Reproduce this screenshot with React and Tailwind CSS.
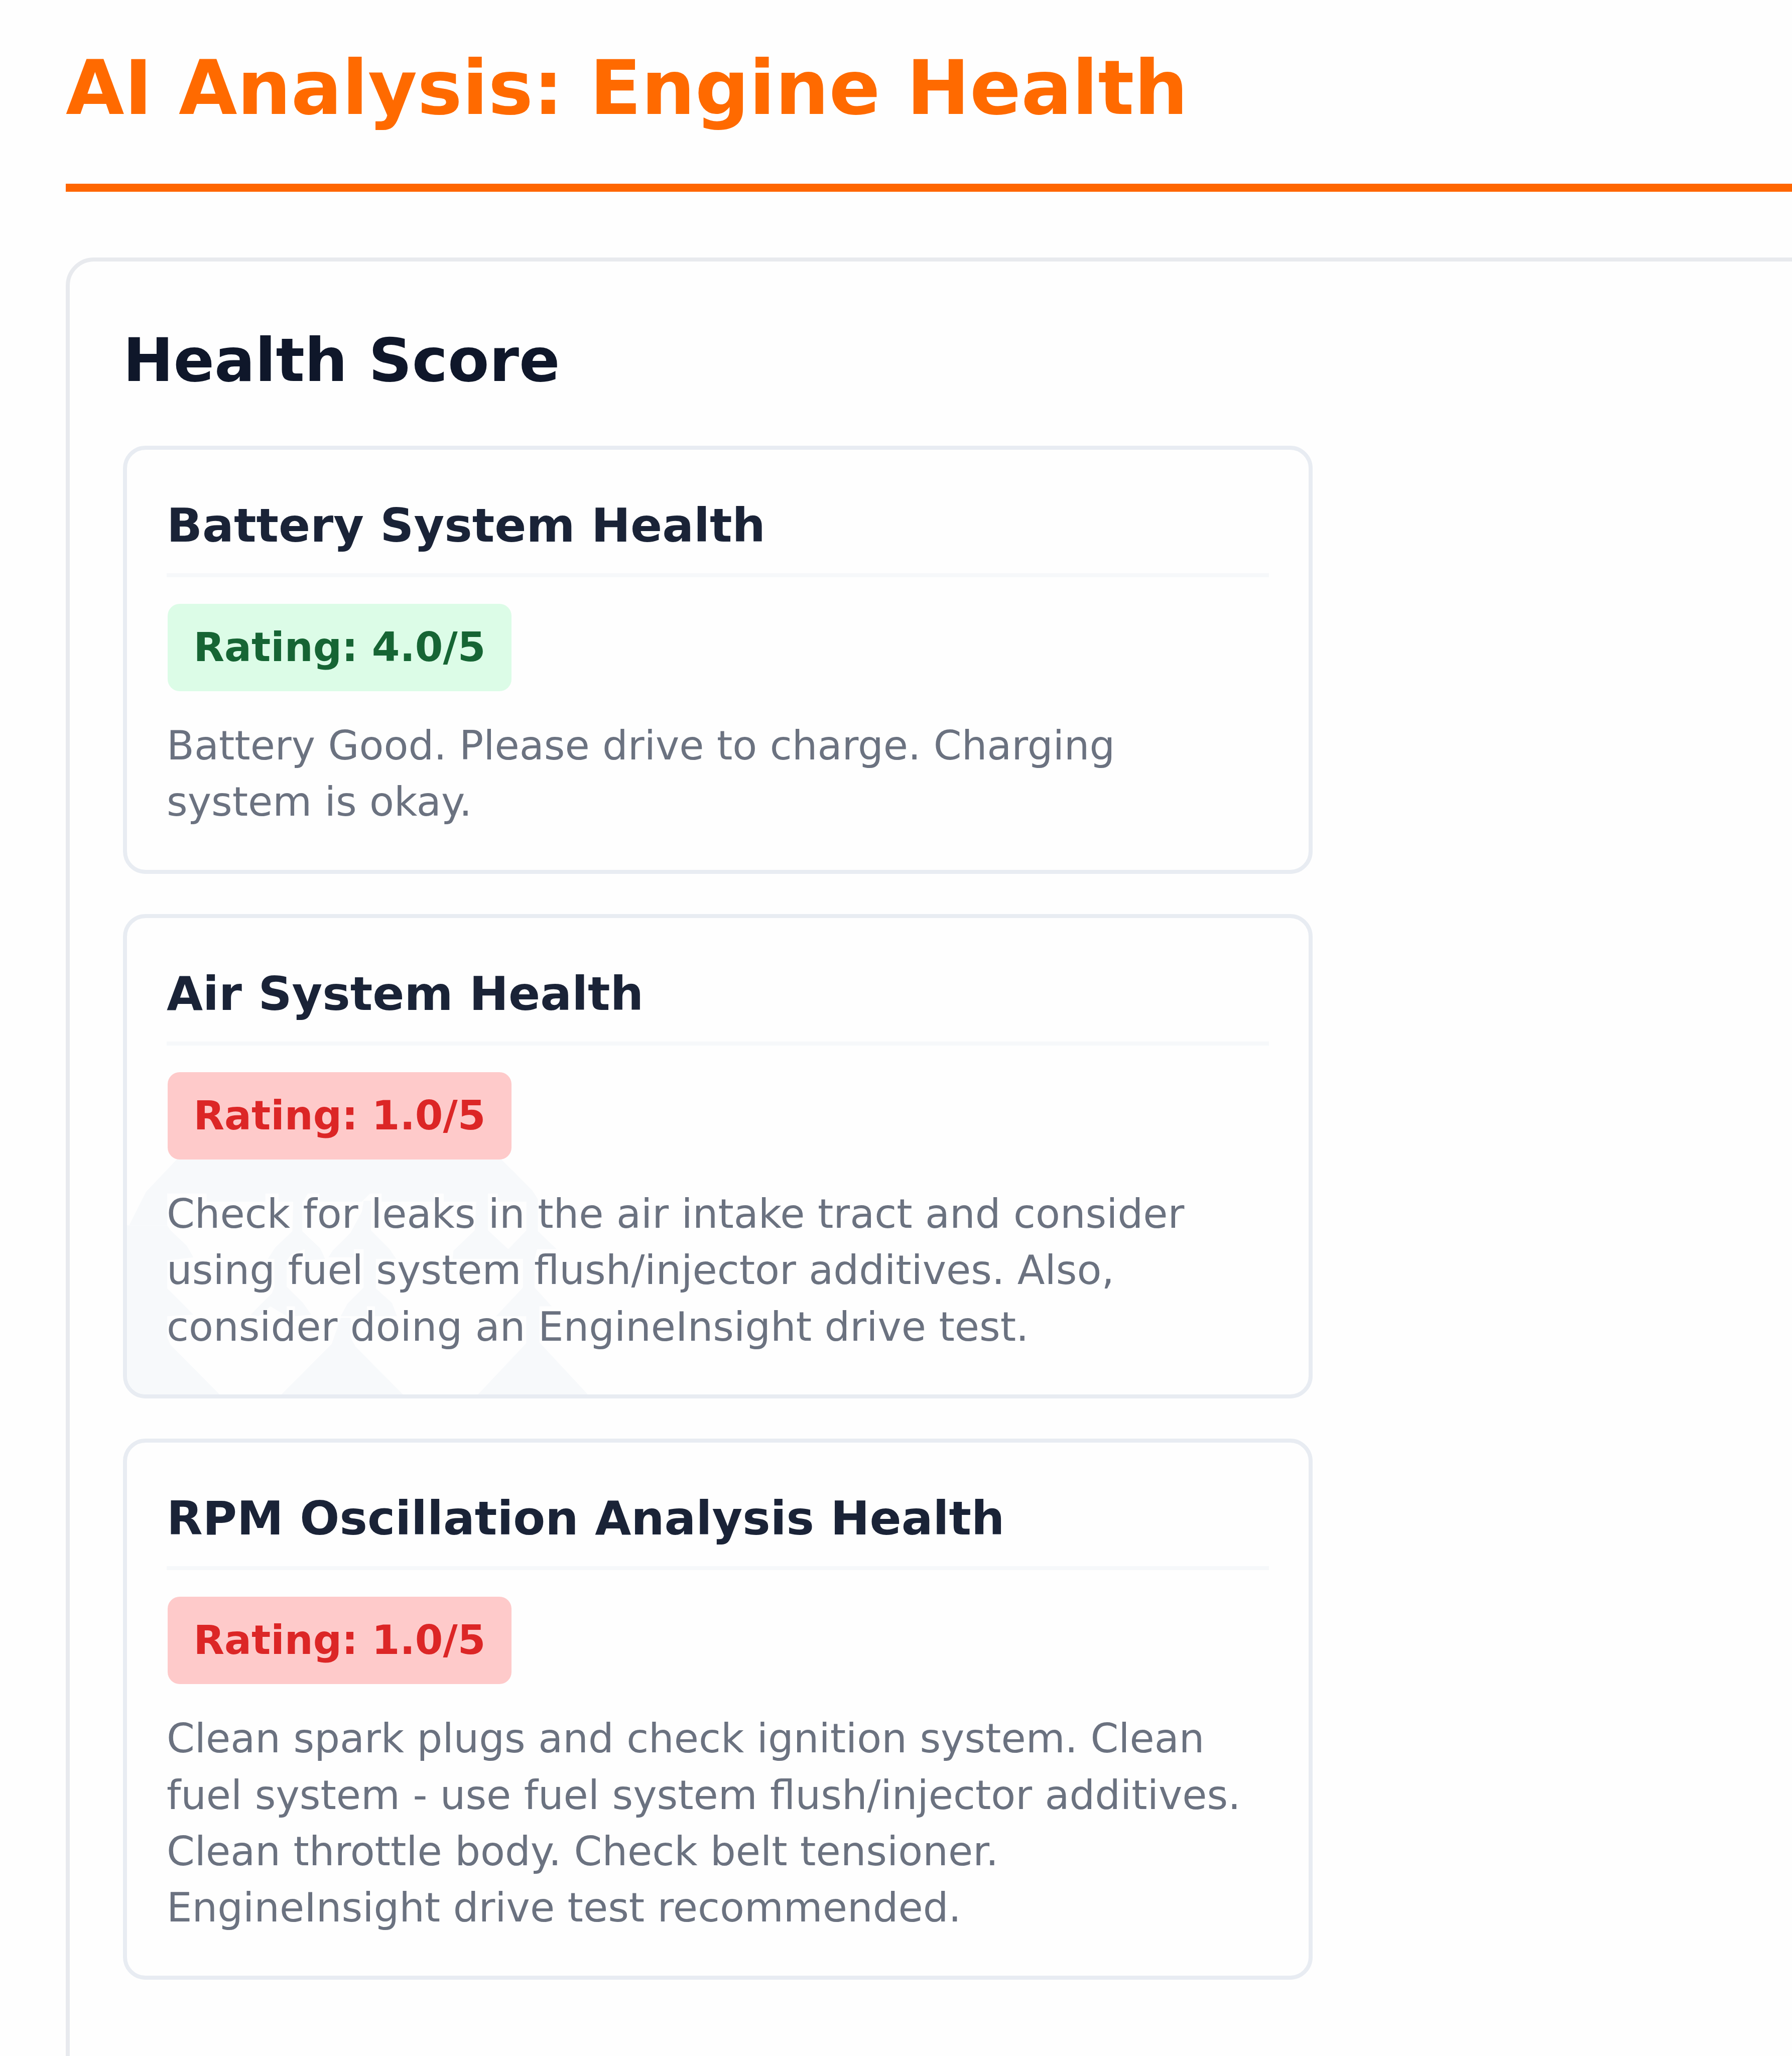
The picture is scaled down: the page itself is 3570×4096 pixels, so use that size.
import React from 'react'

const healthItems = [
  { title: 'Battery System Health', rating: '4.0', status: 'good', lines: ['Battery Good. Please drive to charge. Charging', 'system is okay.'] },
  { title: 'Air System Health', rating: '1.0', status: 'bad', watermark: true, lines: ['Check for leaks in the air intake tract and consider', 'using fuel system flush/injector additives. Also,', 'consider doing an EngineInsight drive test.'] },
  { title: 'RPM Oscillation Analysis Health', rating: '1.0', status: 'bad', lines: ['Clean spark plugs and check ignition system. Clean', 'fuel system - use fuel system flush/injector additives.', 'Clean throttle body. Check belt tensioner.', 'EngineInsight drive test recommended.'] },
]

const getStatusColor = (status) => {
  switch (status) {
    case 'good': return 'bg-[#dcfce7] text-[#166534]'
    default: return 'bg-[#fecaca] text-[#dc2626]'
  }
}

// faint logo behind the card text
function Watermark() {
  return (
    <svg className="absolute left-0 bottom-0 w-[946px] h-[489px]" viewBox="35 8 2900 1500" fill="#f7f9fb">
      {/* dome and left edge */}
      <path d="M345 65L150 270L47 475H280V280H520V330H880V280H960V330H1110L1140 280H1210V330H1470L1520 280H1590V330H1910V280H1970V330H2240V280H2300V330H2545V315L2510 260L2315 65Z" />
      <path d="M35 475H280L300 505L400 600L440 670L280 690V860L440 1020L280 1030V1160L300 1205L600 1508H35Z" />
      {/* first row */}
      <path d="M1050 325H1105V510L1215 615L1245 680L1120 690V620L1040 650L1010 690V850L1110 950L1160 1020L1060 1030V970H1010V1030L910 970L840 1030L790 1020L920 890L935 850V680H895L940 610L1045 510Z" />
      <path d="M1480 325H1525V505L1639 620L1679 680H1555V860L1654 950L1684 1030H1549V970H1500V1030H1340L1380 955L1480 855V620H1420V670H1265L1290 630L1400 520L1470 390Z" />
      <path d="M2169 325H2240V505L2364 620L2475 505V325H2545V510L2660 620H2540L2525 680V855L2630 970H2554V1190L2850 1508H2179L2474 1195V1030H2289L2454 855V680H2024L2029 630L2159 505Z" />
      {/* bottom notch */}
      <path d="M1340 1040H1400V1160L1430 1215L1720 1508H978L1285 1200Z" />
    </svg>
  )
}

function HealthCard({ item }) {
  return (
    <div className="relative w-[2370px] rounded-[45px] border-[8px] border-[#e8ecf2] overflow-hidden">
      {item.watermark && <Watermark />}
      <div className="relative px-[79px] pt-[79.5px] pb-[78.5px]">
        <h3 className="pb-[25px] mb-[53px] border-b-[8px] border-[#f6f8fa] text-[93.2px] leading-[141px] font-bold text-[#1a2337]">{item.title}</h3>
        <div className={`ml-[2px] w-fit rounded-[24px] px-[51.5px] py-[31px] text-[80px] leading-[112px] font-bold ${getStatusColor(item.status)}`}>
          Rating: {item.rating}/5
        </div>
        <p className="mt-[53.5px] text-[80px] leading-[112.3px] text-[#6b7280] whitespace-nowrap">
          {item.lines.map((line, i) => (
            <span key={i} className="block">{line}</span>
          ))}
        </p>
      </div>
    </div>
  )
}

export default function App() {
  return (
    <div className="w-[3570px] h-[4096px] overflow-hidden bg-[#fefefe] pl-[131px] pt-[87px] font-['DejaVu_Sans',sans-serif]">
      <div className="w-[3700px]">
        <h1 className="pb-[103px] border-b-[16px] border-[#ff6600] text-[150.6px] leading-[176px] font-bold text-[#ff6a00]">AI Analysis: Engine Health</h1>
        <section className="mt-[131px] h-[3900px] rounded-[56px] border-[8px] border-[#e8eaee] p-[106px]">
          <h2 className="text-[120.2px] leading-[181px] font-bold text-[#0f172a]">Health Score</h2>
          <div className="mt-[80px] flex flex-col gap-[80px]">
            {healthItems.map((item) => (
              <HealthCard key={item.title} item={item} />
            ))}
          </div>
        </section>
      </div>
    </div>
  )
}
